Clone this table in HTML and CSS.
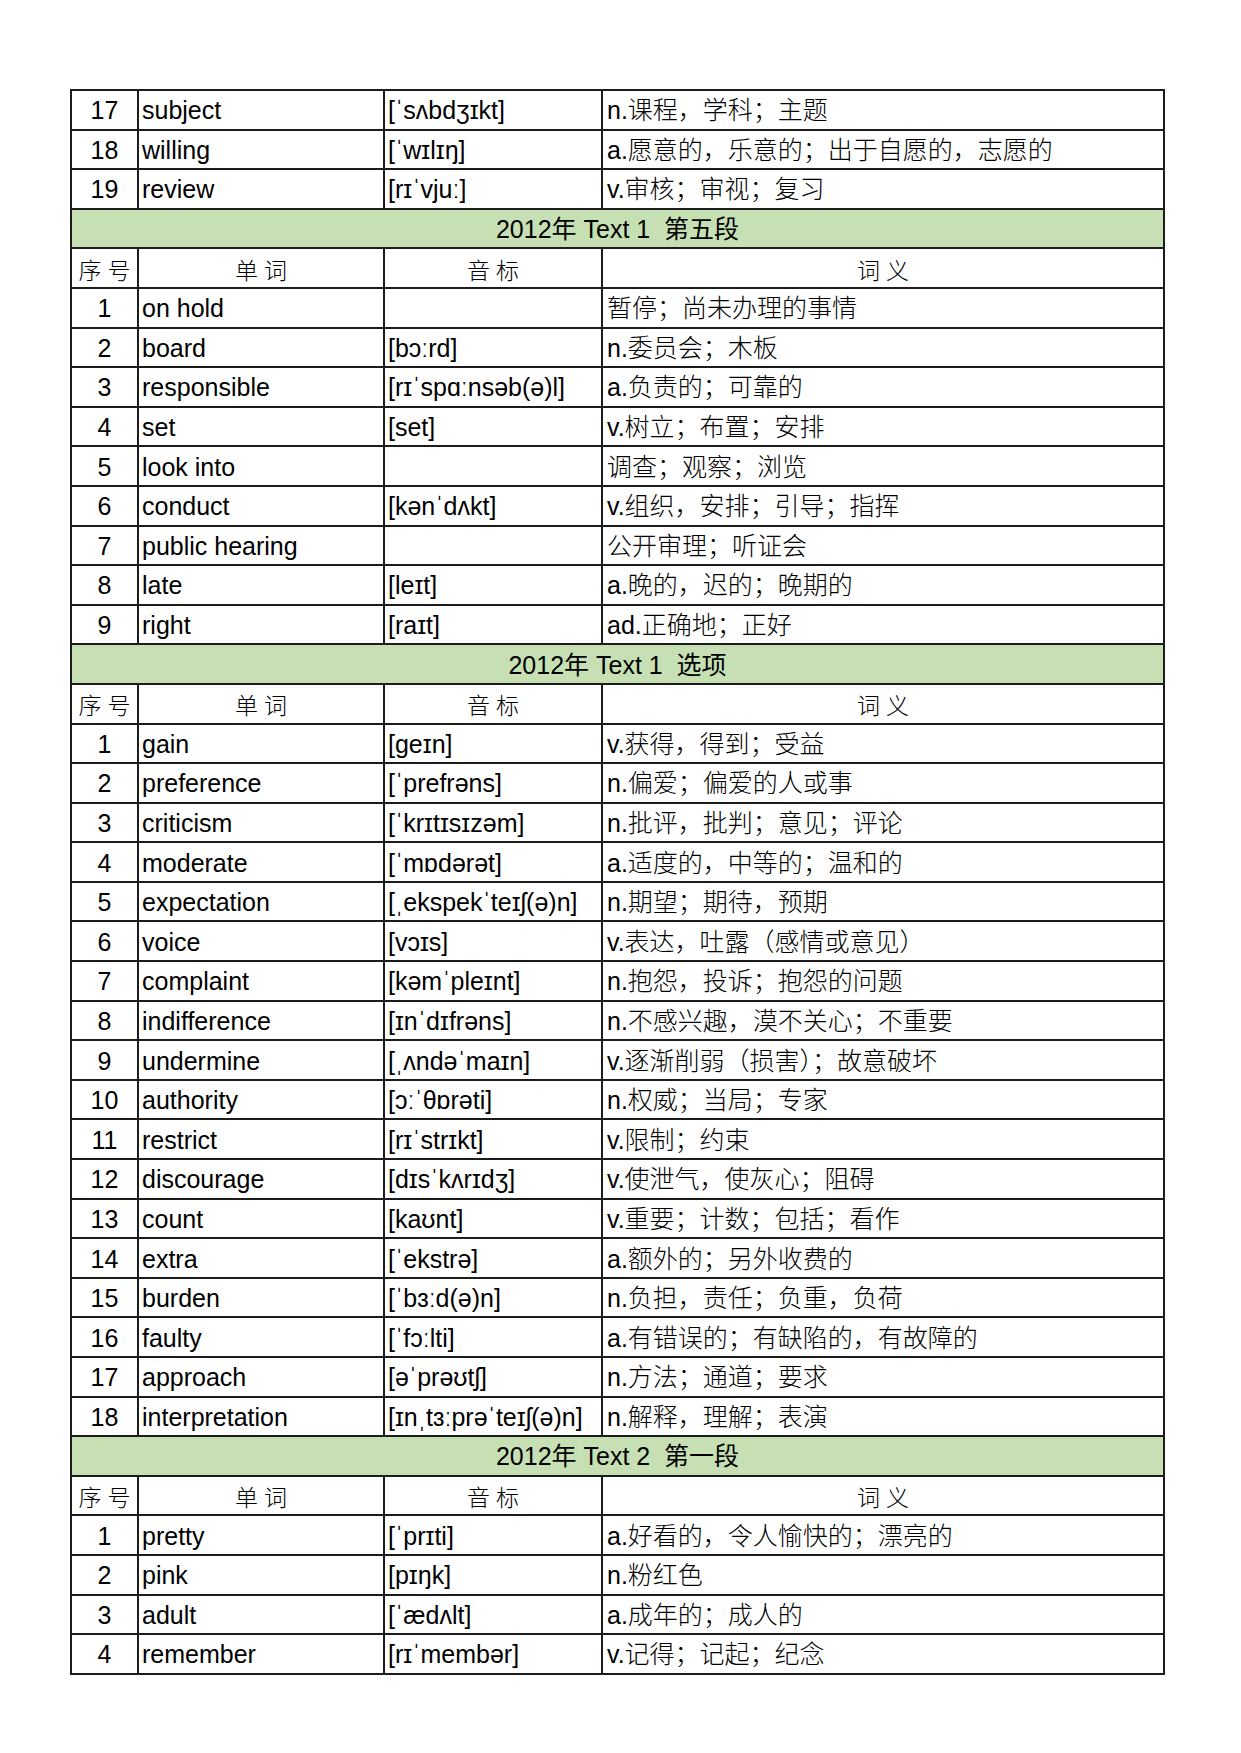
FILE: index.html
```html
<!DOCTYPE html>
<html lang="zh-CN">
<head>
<meta charset="utf-8">
<title>词汇表</title>
<link rel="stylesheet" href="styles.css">
</head>
<body>
<table class="vocab">
<colgroup>
<col class="c-num"><col class="c-word"><col class="c-ipa"><col class="c-mean">
</colgroup>
<tbody>
<tr><td class="num">17</td><td>subject</td><td>[ˈsʌbdʒɪkt]</td><td class="mean">n.课程，学科；主题</td></tr>
<tr><td class="num">18</td><td>willing</td><td>[ˈwɪlɪŋ]</td><td class="mean">a.愿意的，乐意的；出于自愿的，志愿的</td></tr>
<tr><td class="num">19</td><td>review</td><td>[rɪˈvjuː]</td><td class="mean">v.审核；审视；复习</td></tr>
<tr class="band"><td colspan="4">2012年 Text 1&nbsp;&nbsp;第五段</td></tr>
<tr class="head"><td>序号</td><td>单词</td><td>音标</td><td>词义</td></tr>
<tr><td class="num">1</td><td>on hold</td><td></td><td class="mean">暂停；尚未办理的事情</td></tr>
<tr><td class="num">2</td><td>board</td><td>[bɔːrd]</td><td class="mean">n.委员会；木板</td></tr>
<tr><td class="num">3</td><td>responsible</td><td>[rɪˈspɑːnsəb(ə)l]</td><td class="mean">a.负责的；可靠的</td></tr>
<tr><td class="num">4</td><td>set</td><td>[set]</td><td class="mean">v.树立；布置；安排</td></tr>
<tr><td class="num">5</td><td>look into</td><td></td><td class="mean">调查；观察；浏览</td></tr>
<tr><td class="num">6</td><td>conduct</td><td>[kənˈdʌkt]</td><td class="mean">v.组织，安排；引导；指挥</td></tr>
<tr><td class="num">7</td><td>public hearing</td><td></td><td class="mean">公开审理；听证会</td></tr>
<tr><td class="num">8</td><td>late</td><td>[leɪt]</td><td class="mean">a.晚的，迟的；晚期的</td></tr>
<tr><td class="num">9</td><td>right</td><td>[raɪt]</td><td class="mean">ad.正确地；正好</td></tr>
<tr class="band"><td colspan="4">2012年 Text 1&nbsp;&nbsp;选项</td></tr>
<tr class="head"><td>序号</td><td>单词</td><td>音标</td><td>词义</td></tr>
<tr><td class="num">1</td><td>gain</td><td>[geɪn]</td><td class="mean">v.获得，得到；受益</td></tr>
<tr><td class="num">2</td><td>preference</td><td>[ˈprefrəns]</td><td class="mean">n.偏爱；偏爱的人或事</td></tr>
<tr><td class="num">3</td><td>criticism</td><td>[ˈkrɪtɪsɪzəm]</td><td class="mean">n.批评，批判；意见；评论</td></tr>
<tr><td class="num">4</td><td>moderate</td><td>[ˈmɒdərət]</td><td class="mean">a.适度的，中等的；温和的</td></tr>
<tr><td class="num">5</td><td>expectation</td><td>[ˌekspekˈteɪʃ(ə)n]</td><td class="mean">n.期望；期待，预期</td></tr>
<tr><td class="num">6</td><td>voice</td><td>[vɔɪs]</td><td class="mean">v.表达，吐露（感情或意见）</td></tr>
<tr><td class="num">7</td><td>complaint</td><td>[kəmˈpleɪnt]</td><td class="mean">n.抱怨，投诉；抱怨的问题</td></tr>
<tr><td class="num">8</td><td>indifference</td><td>[ɪnˈdɪfrəns]</td><td class="mean">n.不感兴趣，漠不关心；不重要</td></tr>
<tr><td class="num">9</td><td>undermine</td><td>[ˌʌndəˈmaɪn]</td><td class="mean">v.逐渐削弱（损害）；故意破坏</td></tr>
<tr><td class="num">10</td><td>authority</td><td>[ɔːˈθɒrəti]</td><td class="mean">n.权威；当局；专家</td></tr>
<tr><td class="num">11</td><td>restrict</td><td>[rɪˈstrɪkt]</td><td class="mean">v.限制；约束</td></tr>
<tr><td class="num">12</td><td>discourage</td><td>[dɪsˈkʌrɪdʒ]</td><td class="mean">v.使泄气，使灰心；阻碍</td></tr>
<tr><td class="num">13</td><td>count</td><td>[kaʊnt]</td><td class="mean">v.重要；计数；包括；看作</td></tr>
<tr><td class="num">14</td><td>extra</td><td>[ˈekstrə]</td><td class="mean">a.额外的；另外收费的</td></tr>
<tr><td class="num">15</td><td>burden</td><td>[ˈbɜːd(ə)n]</td><td class="mean">n.负担，责任；负重，负荷</td></tr>
<tr><td class="num">16</td><td>faulty</td><td>[ˈfɔːlti]</td><td class="mean">a.有错误的；有缺陷的，有故障的</td></tr>
<tr><td class="num">17</td><td>approach</td><td>[əˈprəʊtʃ]</td><td class="mean">n.方法；通道；要求</td></tr>
<tr><td class="num">18</td><td>interpretation</td><td>[ɪnˌtɜːprəˈteɪʃ(ə)n]</td><td class="mean">n.解释，理解；表演</td></tr>
<tr class="band"><td colspan="4">2012年 Text 2&nbsp;&nbsp;第一段</td></tr>
<tr class="head"><td>序号</td><td>单词</td><td>音标</td><td>词义</td></tr>
<tr><td class="num">1</td><td>pretty</td><td>[ˈprɪti]</td><td class="mean">a.好看的，令人愉快的；漂亮的</td></tr>
<tr><td class="num">2</td><td>pink</td><td>[pɪŋk]</td><td class="mean">n.粉红色</td></tr>
<tr><td class="num">3</td><td>adult</td><td>[ˈædʌlt]</td><td class="mean">a.成年的；成人的</td></tr>
<tr><td class="num">4</td><td>remember</td><td>[rɪˈmembər]</td><td class="mean">v.记得；记起；纪念</td></tr>
</tbody>
</table>
</body>
</html>
```
FILE: styles.css
```css
html, body {
  margin: 0;
  padding: 0;
  background: #ffffff;
}
body {
  padding: 89px 0 0 70px;
  font-family: "Liberation Sans", Arial, "Noto Sans CJK SC", sans-serif;
  font-size: 25px;
  color: #000;
}
.vocab {
  border-collapse: collapse;
  table-layout: fixed;
  width: 1093px;
}
.c-num { width: 67px; }
.c-word { width: 246px; }
.c-ipa { width: 218px; }
.c-mean { width: 562px; }
.vocab td {
  border: 2px solid #1c1c1c;
  height: 35.6px;
  padding: 2px 3px 0;
  white-space: nowrap;
  overflow: hidden;
  vertical-align: middle;
  line-height: 1;
}
.vocab td.num {
  text-align: center;
}
.vocab td.mean {
  padding-left: 4px;
  font-weight: 300;
}
.vocab tr.band td {
  background: #c6e0b4;
  text-align: center;
}
.vocab tr.head td {
  text-align: center;
  font-family: "Noto Sans CJK SC", sans-serif;
  font-weight: 300;
  font-size: 23px;
  letter-spacing: 6px;
  padding: 2px 0 0 6px;
}
```
